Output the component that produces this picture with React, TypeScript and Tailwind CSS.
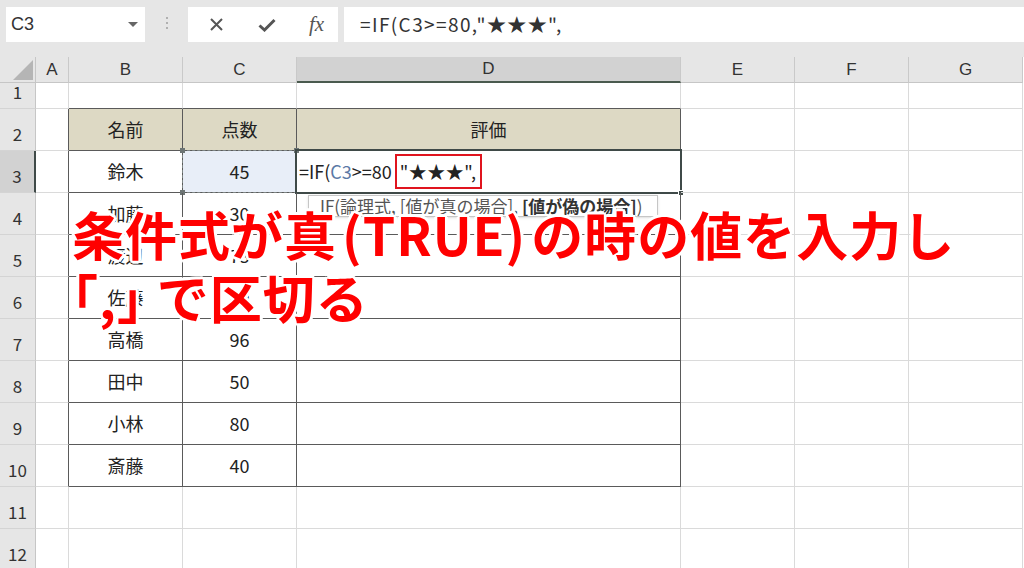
import React from "react";

const JP = "font-['Noto_Sans_CJK_JP','Noto_Sans',sans-serif]";
const COLS = [
  { k: "A", w: "w-[33px]" },
  { k: "B", w: "w-[114px]" },
  { k: "C", w: "w-[114px]" },
  { k: "D", w: "w-[384px]" },
  { k: "E", w: "w-[114px]" },
  { k: "F", w: "w-[114px]" },
  { k: "G", w: "w-[114px]" },
];

const ROWS: [string, string][] = [
  ["鈴木", "45"],
  ["加藤", "30"],
  ["渡辺", "73"],
  ["佐藤", "60"],
  ["高橋", "96"],
  ["田中", "50"],
  ["小林", "80"],
  ["斎藤", "40"],
];

// 行番号
function RowHead({ n, h, active }: { n: number; h: string; active?: boolean }) {
  return (
    <div
      className={`w-[36px] ${h} shrink-0 flex items-end justify-center pb-[4px] text-[17px] text-[#333] border-b border-[#d4d4d4] ${
        active ? "bg-[#d2d2d2] border-r-2 border-r-[#3f4a48]" : "bg-[#e6e6e6] border-r border-r-[#c6c6c6]"
      }`}
    >
      {n}
    </div>
  );
}

function Cell({ w, cls = "", children }: { w: string; cls?: string; children?: React.ReactNode }) {
  return <div className={`${w} shrink-0 box-border relative flex items-center justify-center ${cls}`}>{children}</div>;
}

const light = "border-r border-b border-[#dadada]";
const dark = "border-r border-b border-[#5a5a5a]";

export default function App() {
  return (
    <div className={`relative w-[1024px] h-[568px] overflow-hidden bg-white ${JP}`}>
      {/* 数式バー */}
      <div className="h-[57px] bg-[#e6e6e6] flex items-start pt-[7px]">
        <div className="ml-[6px] w-[139px] h-[35px] bg-white flex items-center justify-between pl-[5px] pr-[7px]">
          <span className="text-[18px] text-[#333] font-['Liberation_Sans',sans-serif]">C3</span>
          <svg width="10" height="6" viewBox="0 0 10 6"><path d="M0 0h10L5 5z" fill="#666" /></svg>
        </div>
        <div className="w-[43px] h-[35px] flex flex-col items-center justify-center gap-[3px] -mt-[2px]">
          <span className="w-[2px] h-[2px] bg-[#b0b0b0]" />
          <span className="w-[2px] h-[2px] bg-[#b0b0b0]" />
          <span className="w-[2px] h-[2px] bg-[#b0b0b0]" />
        </div>
        <div className="w-[150px] h-[35px] bg-white flex items-center">
          <svg className="ml-[21px]" width="15" height="15" viewBox="0 0 15 15">
            <path d="M2 2l11 11M13 2L2 13" stroke="#555" strokeWidth="2" />
          </svg>
          <svg className="ml-[34px]" width="18" height="14" viewBox="0 0 18 14">
            <path d="M1.5 7.5l5 4.5L16.5 2" stroke="#555" strokeWidth="3" fill="none" />
          </svg>
          <span className="ml-[33px] text-[21px] italic text-[#555] font-['Liberation_Serif',serif] leading-none">fx</span>
        </div>
        <div className="ml-[6px] flex-1 h-[35px] bg-white flex items-center pl-[16px] text-[19px] text-[#333] tracking-[1.4px]">
          =IF(C3&gt;=80,"★★★",
        </div>
      </div>

      {/* 列見出し */}
      <div className="flex h-[26px]">
        <div className="w-[36px] shrink-0 bg-[#e6e6e6] border-r border-b border-[#c6c6c6] flex items-end justify-end p-[2px]">
          <svg width="20" height="20" viewBox="0 0 20 20"><path d="M20 0v20H0z" fill="#b5b5b5" /></svg>
        </div>
        {COLS.map((c) => (
          <Cell
            key={c.k}
            w={c.w}
            cls={`text-[17px] text-[#333] font-['Liberation_Sans',sans-serif] border-r border-[#c9c9c9] ${
              c.k === "D" ? "bg-[#d2d2d2] border-b-2 border-b-[#4a5a4e]" : "bg-[#e6e6e6] border-b border-b-[#c6c6c6]"
            }`}
          >
            {c.k}
          </Cell>
        ))}
      </div>

      {/* 1行目 */}
      <div className="flex h-[26px]">
        <RowHead n={1} h="h-[26px]" />
        <Cell w="w-[33px]" cls={light} />
        <Cell w="w-[114px]" cls="border-r border-r-[#dadada] border-b border-b-[#5a5a5a]" />
        <Cell w="w-[114px]" cls="border-r border-r-[#dadada] border-b border-b-[#5a5a5a]" />
        <Cell w="w-[384px]" cls="border-r border-r-[#dadada] border-b border-b-[#5a5a5a]" />
        <Cell w="w-[114px]" cls={light} />
        <Cell w="w-[114px]" cls={light} />
        <Cell w="w-[114px]" cls={light} />
      </div>

      {/* 2行目 見出し */}
      <div className="flex h-[42px] text-[18px] text-[#222]">
        <RowHead n={2} h="h-[42px]" />
        <Cell w="w-[33px]" cls="border-r border-r-[#5a5a5a] border-b border-b-[#dadada]" />
        <Cell w="w-[114px]" cls={`${dark} bg-[#ddd9c4]`}>名前</Cell>
        <Cell w="w-[114px]" cls={`${dark} bg-[#ddd9c4]`}>点数</Cell>
        <Cell w="w-[384px]" cls={`${dark} bg-[#ddd9c4]`}>評価</Cell>
        <Cell w="w-[114px]" cls={light} />
        <Cell w="w-[114px]" cls={light} />
        <Cell w="w-[114px]" cls={light} />
      </div>

      {ROWS.map(([name, score], i) => {
        const r = i + 3;
        const first = i === 0;
        return (
          <div key={r} className="flex h-[42px] text-[18px] text-[#222]">
            <RowHead n={r} h="h-[42px]" active={first} />
            <Cell w="w-[33px]" cls="border-r border-r-[#5a5a5a] border-b border-b-[#dadada]" />
            <Cell w="w-[114px]" cls={dark}>{name}</Cell>
            <Cell w="w-[114px]" cls={`${dark} ${first ? "bg-[#e8eef8]" : ""}`}>
              {score}
              {first && (
                <>
                  <div className="absolute -inset-[1px] border border-dashed border-[#7d8585]" />
                  <div className="absolute -left-[3px] -top-[3px] w-[5px] h-[5px] bg-[#6d7575]" />
                  <div className="absolute -right-[3px] -top-[3px] w-[5px] h-[5px] bg-[#6d7575]" />
                  <div className="absolute -left-[3px] -bottom-[3px] w-[5px] h-[5px] bg-[#6d7575]" />
                </>
              )}
            </Cell>
            <Cell w="w-[384px]" cls={`${dark} !justify-start`}>
              {first && (
                <>
                  <span className="pl-[2px] flex items-center text-[18px]">
                    =IF(<span className="text-[#5b79a6]">C3</span>&gt;=80
                    <span className="ml-[3px] px-[3px] h-[35px] flex items-center border-2 border-[#e0141e] tracking-[0.5px]">"★★★",</span>
                  </span>
                  <div className="absolute -inset-[2px] border-2 border-[#3f4a48]" />
                  <div className="absolute -right-[4px] -bottom-[4px] w-[6px] h-[6px] bg-[#3f4a48] border border-white" />
                </>
              )}
            </Cell>
            <Cell w="w-[114px]" cls={light} />
            <Cell w="w-[114px]" cls={light} />
            <Cell w="w-[114px]" cls={light} />
          </div>
        );
      })}

      {[11, 12].map((r) => (
        <div key={r} className="flex h-[42px]">
          <RowHead n={r} h="h-[42px]" />
          {COLS.map((c) => (
            <Cell key={c.k} w={c.w} cls={light} />
          ))}
        </div>
      ))}

      {/* 関数ヒント */}
      <div className="absolute left-[308px] top-[195px] w-[350px] h-[22px] bg-white border border-[#c6c6c6] shadow-sm flex items-center pl-[11px] text-[17px] text-[#555] whitespace-nowrap">
        IF(論理式, [値が真の場合], <b className="ml-[4px] text-[#333]">[値が偽の場合]</b>)
      </div>

      {/* 注釈 */}
      <div className="absolute left-[72px] top-[202px] text-[52px] leading-[63px] font-bold text-[#ff0000] whitespace-nowrap tracking-[1px] [text-shadow:3px_0_0_#fff,-3px_0_0_#fff,0_3px_0_#fff,0_-3px_0_#fff,2px_2px_0_#fff,-2px_-2px_0_#fff,2px_-2px_0_#fff,-2px_2px_0_#fff]">
        <div>
          条件式が真<span className="mx-[5px]">(TRUE)</span>の時の値を入力し
        </div>
        <div>｢,｣ で区切る</div>
      </div>
    </div>
  );
}
